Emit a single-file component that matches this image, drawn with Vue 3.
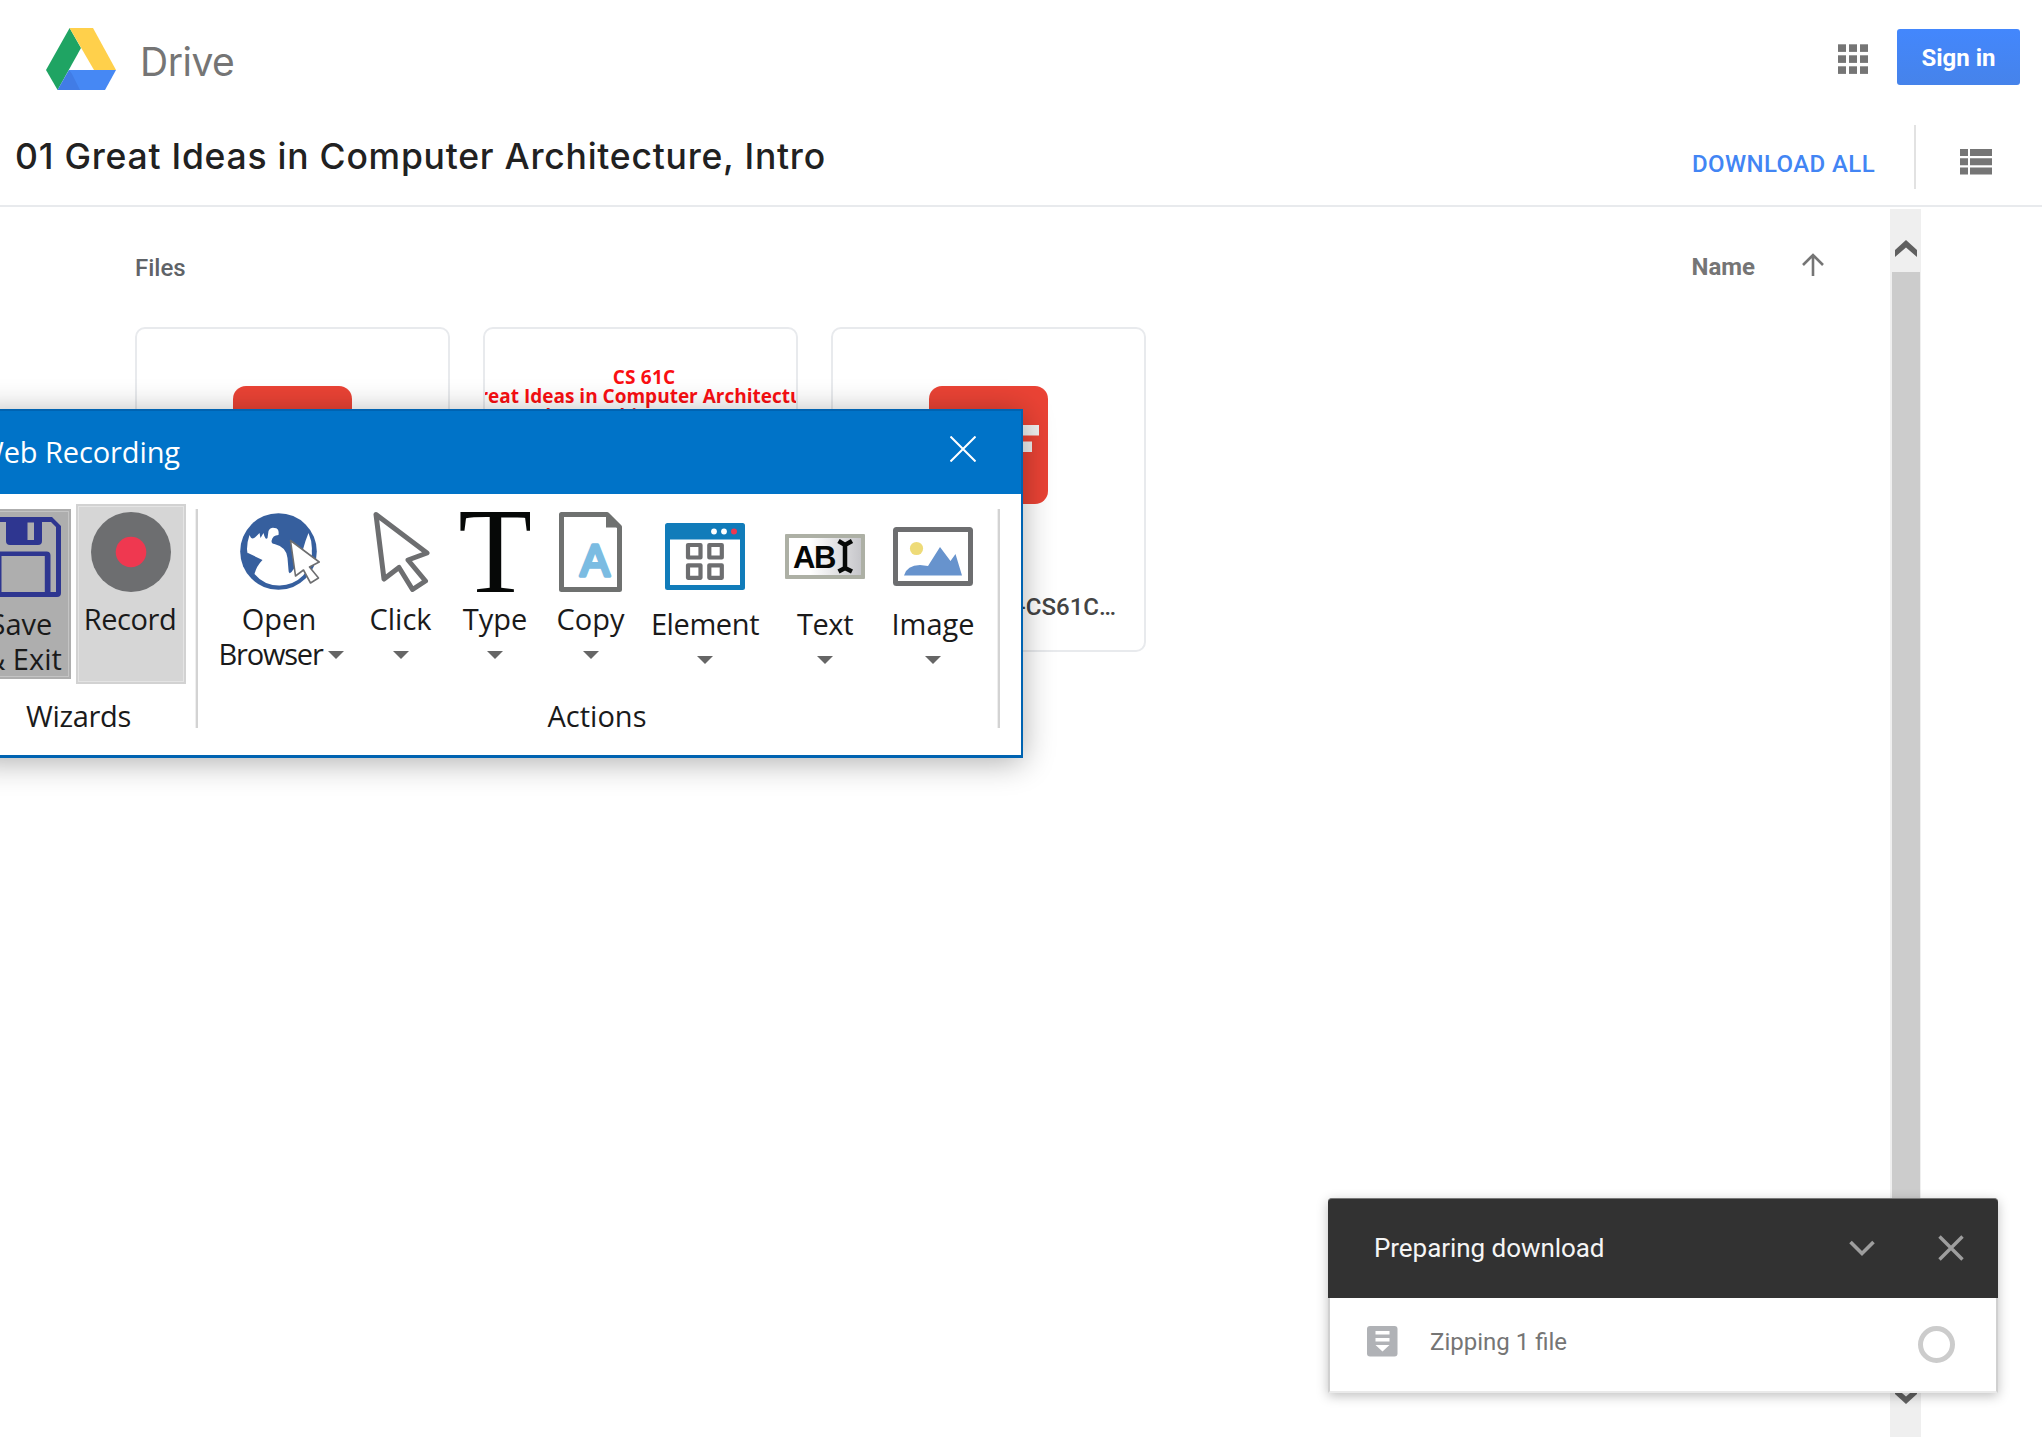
<script setup>
const actions = [
  { id: 'browser', label: 'Open', second: 'Browser', width: 164 },
  { id: 'click', label: 'Click', width: 77 },
  { id: 'type', label: 'Type', width: 112 },
  { id: 'copy', label: 'Copy', width: 79 },
  { id: 'element', label: 'Element', width: 150 },
  { id: 'text', label: 'Text', width: 90 },
  { id: 'image', label: 'Image', width: 126 },
]
</script>

<template>
  <div class="page">
    <header class="topbar">
      <svg class="logo" width="70" height="62" viewBox="0 0 70 62">
        <path fill="#1fa463" d="M23.6 0 35 20 11.6 62 0 42z" />
        <path fill="#ffd04b" d="M23.6 0H47l23 42H48z" />
        <path fill="#4688f4" d="M23 42h47L59 62H11.6z" />
        <path fill="#3c6fd8" opacity=".5" d="M23 42 11.6 62H34L26 46z" />
      </svg>
      <span class="brand t">Drive</span>
      <svg class="apps" width="30" height="30" viewBox="0 0 30 30" fill="#757575">
        <template v-for="r in 3" :key="r">
          <rect v-for="c in 3" :key="c" :x="(c - 1) * 11" :y="(r - 1) * 11 + 0.3" width="8" height="7.6" />
        </template>
      </svg>
      <button class="signin"><span class="t">Sign in</span></button>
    </header>

    <div class="titlebar">
      <h1><span class="t">01 Great Ideas in Computer Architecture, Intro</span></h1>
      <a class="download t">DOWNLOAD ALL</a>
      <span class="rule"></span>
      <svg class="list" width="32" height="26" viewBox="0 0 32 26" fill="#757575">
        <path d="M0 0h8v7H0zM10 0h22v7H10zM0 9.3h8v7H0zM10 9.3h22v7H10zM0 18.6h8v7H0zM10 18.6h22v7H10z" />
      </svg>
    </div>

    <main class="content">
      <section class="files">
        <div class="files-head">
          <span class="files-label t">Files</span>
          <span class="sort t">Name</span>
          <svg width="22" height="23" viewBox="0 0 22 23" fill="none" stroke="#757575" stroke-width="2.6">
            <path d="M11 23V2M1 12 11 2l10 10" />
          </svg>
        </div>
        <div class="cards">
          <article class="card"><div class="pdf"></div></article>
          <article class="card slide">
            <p class="s1"><span class="t">CS 61C</span></p>
            <p class="s2"><span class="t">Great Ideas in Computer Architecture</span></p>
            <p class="s3"><span class="t">(a.k.a. Machine Structures)</span></p>
          </article>
          <article class="card">
            <div class="pdf">
              <svg width="119" height="118" viewBox="0 0 119 118">
                <path fill="#f1f1f1" d="M83 39h27v10.500H93v6h10v10.500H93v13H83z" />
              </svg>
            </div>
            <p class="name"><span class="t">-CS61C…</span></p>
          </article>
        </div>
      </section>
      <div class="scroll">
        <svg width="22" height="17" viewBox="0 0 22 17"><path fill="#606060" d="M11 0 22 10v7L11 7.500 0 17v-7z" /></svg>
        <div class="thumb"></div>
        <svg class="down" width="22" height="17" viewBox="0 0 22 17"><path fill="#606060" d="M11 17 0 7V0l11 9.500L22 0v7z" /></svg>
      </div>
    </main>

    <div class="window">
      <div class="caption">
        <span class="t">Web Recording</span>
        <svg width="26" height="26" viewBox="0 0 26 26" stroke="#fff" stroke-width="2"><path d="M.5.500l25 25M25.500.500l-25 25" /></svg>
      </div>
      <div class="ribbon">
        <div class="group wizards">
          <div class="tools">
            <div class="tool save">
              <svg width="80" height="80" viewBox="0 0 80 80">
                <path fill="#2e3690" fill-rule="evenodd" d="M4 0h67l9 9v67q0 4-4 4H4q-4 0-4-4V4q0-4 4-4zM5 5v70h5.500V38.500q0-4 4-4h51q4 0 4 4V75H75V10l-5-5h-9v19q0 4-4 4H29q-4 0-4-4V5zM20.500 39v36h43.300V39zM46.500 5.500V23H53V5.500z" />
              </svg>
              <span class="label t">Save</span>
              <span class="label exit t">&amp; Exit</span>
            </div>
            <div class="tool record">
              <svg width="80" height="80" viewBox="0 0 80 80">
                <circle cx="40" cy="40" r="40" fill="#6d6e70" /><circle cx="40" cy="40" r="15.300" fill="#ef3850" />
              </svg>
              <span class="label t">Record</span>
            </div>
          </div>
          <div class="group-name"><span class="t">Wizards</span></div>
        </div>
        <i class="sep"></i>
        <div class="group actions">
          <div class="tools">
            <div v-for="a in actions" :key="a.id" class="tool" :class="a.id" :style="{ width: a.width + 'px' }">
              <svg v-if="a.id === 'browser'" width="80" height="80" viewBox="0 0 80 80">
                <circle cx="38.500" cy="39.500" r="38.300" fill="#365f9e" />
                <path fill="#fff" d="M9.500 23c2 5 4 4 7 1l3-3 1 5 3-5q2 8 4 5l1-7q2-4 6-3 5 0 4 7-6 0-7 6 0 3 3 3 12 3 13 14l1 12q0 5 3 2l8-11 6-20 3-8q4 9 3.300 18A32 32 0 0 1 39 73.500 32 32 0 0 1 14.500 62q2-8 8-14L8 41q-.7 1-1-4 .3-8 2.500-14z" />
                <path fill="#fff" stroke="#6d6e70" stroke-width="1.600" stroke-linejoin="round" d="m50.500 28.500 28.700 21.500-9.700 5 9 11-8 5-7-13-8 6z" />
              </svg>
              <svg v-else-if="a.id === 'click'" width="58" height="80" viewBox="0 0 58 80">
                <path fill="#fff" stroke="#6d6e70" stroke-width="5" stroke-linejoin="round" d="M4 2.500 55 41 36 48 53.500 69 40.500 77.500 27 55.500 12 67z" />
              </svg>
              <svg v-else-if="a.id === 'type'" width="70" height="80" viewBox="0 0 70 80">
                <text x="35.500" y="79.800" text-anchor="middle" font-family="Liberation Serif, serif" font-size="122" fill="#060807">T</text>
              </svg>
              <svg v-else-if="a.id === 'copy'" width="63" height="80" viewBox="0 0 63 80">
                <path fill="#fff" stroke="#6f7170" stroke-width="5" stroke-linejoin="round" d="M2.500 2.500H48L60.500 15V77.500H2.500z" />
                <path fill="#6f7170" d="M47 2v13.500h14z" />
                <text x="36" y="63.500" text-anchor="middle" font-family="Liberation Sans, sans-serif" font-size="44" fill="#7bbce2" stroke="#7bbce2" stroke-width="3.500" stroke-linejoin="round">A</text>
              </svg>
              <svg v-else-if="a.id === 'element'" width="80" height="67" viewBox="0 0 80 67">
                <rect width="80" height="67" rx="2.500" fill="#117cba" />
                <path fill="#fff" d="M5 16.500h70V62H5z" />
                <circle cx="49" cy="8.500" r="2.900" fill="#fff" /><circle cx="59" cy="8.500" r="2.900" fill="#fff" /><circle cx="69" cy="8.500" r="3" fill="#ef3850" />
                <path fill="none" stroke="#6d6e70" stroke-width="4.200" stroke-linejoin="round" d="M23 22h12.500v12.500H23zM44.300 22h12.500v12.500H44.300zM23 42.300h12.500v12.500H23zM44.300 42.300h12.500v12.500H44.300z" />
              </svg>
              <svg v-else-if="a.id === 'text'" width="80" height="45" viewBox="0 0 80 45">
                <defs><linearGradient id="tg"><stop offset=".3" stop-color="#fff" /><stop offset="1" stop-color="#c6c6ca" /></linearGradient></defs>
                <rect width="80" height="45" rx="1" fill="#adb0a5" />
                <path fill="url(#tg)" d="M4 4h72v37H4z" />
                <text x="8" y="33.500" textLength="43" font-family="Liberation Sans, sans-serif" font-weight="700" font-size="31" fill="#060807">AB</text>
                <path fill="none" stroke="#060807" stroke-width="4.500" d="M60 9v27M53.500 7l6.500 4 7-4M53.500 37.500l6.500-3.500 7 3.500" />
              </svg>
              <svg v-else width="80" height="59" viewBox="0 0 80 59">
                <rect x="2.500" y="2.500" width="75" height="54" rx="1" fill="#fff" stroke="#6d6e70" stroke-width="5" />
                <circle cx="23.500" cy="21.500" r="6.600" fill="#eedb78" />
                <path fill="#6793cd" d="M11 48.500Q14 38 27 38l8 1 12-19 10.500 14 5-7L69 48.500z" />
              </svg>
              <span class="label t">{{ a.label }}</span>
              <span v-if="a.second" class="label second"><span class="t">{{ a.second }}</span><i class="arrow"></i></span>
              <i v-else class="arrow"></i>
            </div>
          </div>
          <div class="group-name"><span class="t">Actions</span></div>
        </div>
        <i class="sep"></i>
      </div>
    </div>

    <div class="toast">
      <div class="toast-head">
        <span class="t">Preparing download</span>
        <svg class="chev" width="26" height="26" viewBox="0 0 26 26" fill="none" stroke="#9e9e9e" stroke-width="3.600"><path d="M1.500 7 13 18.500 24.500 7" /></svg>
        <svg width="26" height="26" viewBox="0 0 26 26" stroke="#9e9e9e" stroke-width="3.400"><path d="m1.500 1.500 23 23M24.500 1.500l-23 23" /></svg>
      </div>
      <div class="toast-body">
        <svg width="31" height="31" viewBox="0 0 31 31">
          <rect width="30.500" height="30.500" rx="3" fill="#b0b2b6" />
          <path fill="#fff" d="M8.500 5h14v3.500h-14zM8.500 12h14v3.500h-14zM8.500 19h14l-7 6.500z" />
        </svg>
        <span class="t">Zipping 1 file</span>
        <i class="ring"></i>
      </div>
    </div>
  </div>
</template>

<style>
body { overflow: hidden; }
</style>

<style scoped>
* { box-sizing: border-box; margin: 0; }
.page { position: relative; width: 2042px; height: 1437px; overflow: hidden; background: #fff; font-family: Roboto, sans-serif; display: flex; flex-direction: column; }
svg { display: block; flex: none; }
i { font-style: normal; }
.t { white-space: nowrap; }

.topbar { height: 115px; padding: 0 22px 0 46px; display: flex; align-items: flex-start; }
.logo { margin-top: 28px; }
.brand { margin: 37px auto 0 24px; font: 400 39px/50px Inter, sans-serif; letter-spacing: -.5px; color: #757575; }
.apps { margin: 44px 29px 0 0; }
.signin { margin-top: 29px; width: 123px; height: 56px; border: 0; border-radius: 3px; background: linear-gradient(#4387fd, #4683ea); color: #fff; font: 700 24px/56px Roboto, sans-serif; padding: 1px 0 0; }

.titlebar { height: 92px; border-bottom: 2px solid #e8eaed; padding: 0 50px 0 15px; display: flex; align-items: flex-start; }
h1 { margin-right: auto; margin-top: 17px; font: 500 35.500px/50px Inter, sans-serif; letter-spacing: .76px; color: #212121; }
.download { margin-top: 34px; font: 500 24px/30px Roboto, sans-serif; letter-spacing: .4px; color: #4285f4; }
.rule { width: 2px; height: 64px; margin: 10px 44px 0 39px; background: #e2e2e2; }
.list { margin-top: 34px; }

.content { flex: 1; display: flex; }
.files { width: 1890px; padding-left: 135px; }
.files-head { height: 120px; padding-top: 44px; display: flex; align-items: flex-start; line-height: 30px; font-size: 24px; }
.files-label { font-weight: 500; color: #5f6368; margin-top: 2px; }
.sort { margin: 1px 47px 0 auto; font-weight: 700; color: #757575; }
.files-head svg { margin: 2px 66px 0 0; }
.cards { display: flex; gap: 33px; }
.card { width: 315px; height: 325px; border: 2px solid #e8eaed; border-radius: 10px; overflow: hidden; display: flex; flex-direction: column; align-items: center; }
.pdf { width: 119px; height: 118px; margin-top: 57px; border-radius: 13px; background: #ea4335; flex: none; }
.name { align-self: flex-end; margin: 88px 28px 0 0; font: 500 24px/30px Roboto, sans-serif; color: #444; }
.slide { padding-left: 7px; }
.slide p { font: 700 19px/19px "Open Sans", sans-serif; color: #fa0f12; white-space: nowrap; }
.slide .s1 { margin-top: 39px; letter-spacing: .2px; }
.slide .s3 { font-size: 18px; }

.scroll { width: 31px; margin-top: 2px; background: #efefef; display: flex; flex-direction: column; align-items: center; padding-top: 31px; }
.thumb { width: 28px; height: 1100px; margin-top: 15px; background: #ccc; }
.down { margin-top: 15px; }

.window { position: absolute; left: -29px; top: 409px; width: 1052px; height: 349px; border: 2px solid #0063b1; border-left: 0; border-bottom: 3px solid #0063b1; background: #fff; box-shadow: 0 4px 30px rgba(0, 0, 0, .32); font-family: "Open Sans", sans-serif; }
.caption { height: 83px; background: #0073c8; color: #fff; display: flex; justify-content: space-between; align-items: flex-start; padding: 25px 45px 0 6px; font-size: 29px; line-height: 32px; letter-spacing: -.1px; }
.ribbon { height: 261px; display: flex; padding-top: 10px; }
.group { display: flex; flex-direction: column; }
.wizards { width: 225px; }
.wizards .group-name { padding-right: 10px; letter-spacing: -.3px; }
.actions { padding-right: 2px; }
.tools { display: flex; height: 194px; align-items: flex-start; }
.tool { display: flex; flex-direction: column; align-items: center; padding-top: 8px; color: #1a1a1a; }
.label { font-size: 29px; line-height: 35px; height: 35px; white-space: nowrap; margin-top: 9px; }
.label + .label { margin-top: 0; }
.save { width: 100px; height: 170px; margin: 5px 5px 0 0; background: #aeaeae; box-shadow: inset 0 0 0 2px #aeaeae, inset 0 0 0 3px #c4c4c4; }
.exit { padding-left: 4px; }
.record { width: 110px; height: 180px; background: #d6d6d6; box-shadow: inset 0 0 0 2px #d2d2d2, inset 0 0 0 3px #e4e4e4; letter-spacing: -.4px; }
.record .label { padding-right: 2px; }
.element svg { margin: 11px 0 7px; }
.text svg { margin: 22px 0 18px; }
.image svg { margin: 15px 0 11px; }
.element, .text { letter-spacing: -.4px; }
.arrow { flex: none; border: 8px solid transparent; border-top-color: #666; border-bottom: 0; margin-top: 15px; }
.browser .label:not(.second) { padding-right: 2px; }
.second { display: flex; gap: 5px; letter-spacing: -1.200px; padding-left: 2px; }
.group-name { height: 35px; text-align: center; font-size: 29px; line-height: 35px; color: #1a1a1a; }
.sep { width: 2px; height: 219px; margin-top: 5px; background: #d3d3d3; box-shadow: -1px 0 #efefef; }

.toast { position: absolute; left: 1328px; top: 1198px; width: 670px; height: 195px; border-radius: 4px 4px 0 0; background: #fff; border: 2px solid #d0d0d0; border-top: 0; border-bottom-color: #eaeaea; box-shadow: 0 3px 12px rgba(0, 0, 0, .25); }
.toast-head { height: 100px; margin: 0 -2px; border-radius: 4px 4px 0 0; border-top: 1px solid #777; background: #323232; color: #f5f5f5; display: flex; align-items: center; padding: 0 34px 1px 46px; font-size: 26px; letter-spacing: -.05px; }
.toast-head .chev { margin-left: auto; margin-right: 63px; }
.toast-body { display: flex; align-items: flex-start; padding: 28px 41px 0 37px; font-size: 24px; line-height: 30px; color: #757575; }
.toast-body .t { margin: 1px 0 0 32px; }
.ring { width: 37px; height: 37px; border: 5.500px solid #ccc; border-radius: 50%; margin-left: auto; }
</style>
